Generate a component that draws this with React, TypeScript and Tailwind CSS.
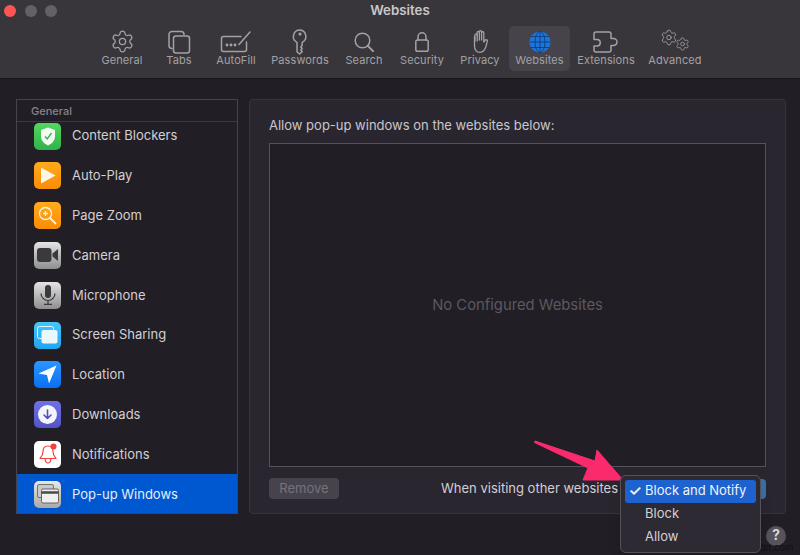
import { Settings } from 'lucide-react';
import type { ReactNode } from 'react';

const font = "font-['Inter','Liberation_Sans',sans-serif]";

const stroke = {
  fill: 'none',
  stroke: 'currentColor',
  strokeWidth: 1.5,
  strokeLinecap: 'round' as const,
  strokeLinejoin: 'round' as const,
};

const TabsIcon = () => (
  <svg width="24" height="24" viewBox="0 0 24 24" {...stroke}>
    <path d="M5 18.500a3 3 0 0 1-3-3V4.500a3 3 0 0 1 3-3h9a3 3 0 0 1 3 3" />
    <rect x="6.500" y="6" width="16" height="17" rx="2.500" />
  </svg>
);

const AutoFillIcon = () => (
  <svg width="32" height="24" viewBox="0 0 32 24" {...stroke}>
    <path d="M21 6.500H3.500a2 2 0 0 0-2 2v11a2 2 0 0 0 2 2h21a2 2 0 0 0 2-2V12" />
    <path d="M19 14.500 30 2" />
    <circle cx="7" cy="15" r=".7" fill="currentColor" />
    <circle cx="11" cy="15" r=".7" fill="currentColor" />
    <circle cx="15" cy="15" r=".7" fill="currentColor" />
  </svg>
);

const KeyIcon = () => (
  <svg width="16" height="26" viewBox="0 0 16 26" {...stroke}>
    <path d="M8 1a6.500 6.500 0 0 0-3 12.300v9.400L7.600 25l2.600-2.400-1.400-1.600 1.400-1.500-1.400-1.600 1.400-1.600v-3A6.500 6.500 0 0 0 8 1Z" />
    <circle cx="8" cy="5" r="1.600" fill="currentColor" stroke="none" />
  </svg>
);

const SearchIcon = () => (
  <svg width="20" height="20" viewBox="0 0 20 20" {...stroke}>
    <circle cx="8.500" cy="8.500" r="7.300" />
    <path d="m13.800 13.800 5.500 5.500" strokeWidth="1.900" />
  </svg>
);

const LockIcon = () => (
  <svg width="14" height="20" viewBox="0 0 14 20" {...stroke}>
    <rect x="0.800" y="8" width="12.400" height="11.200" rx="1.800" />
    <path d="M3 8V4.800a4 4 0 0 1 8 0V8" />
  </svg>
);

const HandIcon = () => (
  <svg width="17" height="23" viewBox="0 0 17 23" {...stroke} strokeWidth={1.300}>
    <path d="M3 11V5a1.100 1.100 0 0 1 2.200 0V2.500a1.100 1.100 0 0 1 2.200 0V1.800a1.100 1.100 0 0 1 2.200 0v1a1.100 1.100 0 0 1 2.200 0V12l1.300-1.800c.8-1 2.800-.2 2.200 1L14 16.500c-1.200 3.500-3 5.800-6 5.800-3.500 0-5.500-2.500-5.500-6.500V7a.8.8 0 0 1 .5-1" />
    <path d="M5.200 5v6M7.400 2.500V10M9.600 2.800V10" />
  </svg>
);

const GlobeIcon = () => (
  <svg width="22" height="22" viewBox="0 0 22 22">
    <circle cx="11" cy="11" r="10.600" fill="#1e74d8" />
    <g fill="none" stroke="#0b3f7e" strokeWidth="0.900">
      <ellipse cx="11" cy="11" rx="5" ry="10.600" />
      <path d="M11 .4v21.200M.4 11h21.200M2 5.500h18M2 16.500h18" />
    </g>
  </svg>
);

const PuzzleIcon = () => (
  <svg width="26" height="22" viewBox="0 0 26 22" {...stroke}>
    <path d="M1 3a2 2 0 0 1 2-2h13a2 2 0 0 1 2 2v4.500h2.500a3.500 3.500 0 0 1 0 7H18V19a2 2 0 0 1-2 2H3a2 2 0 0 1-2-2v-4h3a3 3 0 0 0 0-6.500H1Z" />
  </svg>
);

const AdvancedIcon = () => (
  <div className="-mt-[3px] flex h-[24px] w-[30px] items-start">
    <Settings size={19} strokeWidth={1.200} />
    <Settings size={16} strokeWidth={1.200} className="mt-[8px] -ml-[3px]" />
  </div>
);

const tabs: { label: string; icon: ReactNode; width: string }[] = [
  { label: 'General', icon: <Settings size={25} strokeWidth={1.200} />, width: 'w-[52px]' },
  { label: 'Tabs', icon: <TabsIcon />, width: 'w-[62px]' },
  { label: 'AutoFill', icon: <AutoFillIcon />, width: 'w-[52px]' },
  { label: 'Passwords', icon: <KeyIcon />, width: 'w-[76px]' },
  { label: 'Search', icon: <SearchIcon />, width: 'w-[52px]' },
  { label: 'Security', icon: <LockIcon />, width: 'w-[64px]' },
  { label: 'Privacy', icon: <HandIcon />, width: 'w-[52px]' },
  { label: 'Websites', icon: <GlobeIcon />, width: 'ml-[3px] w-[61px] rounded-[5px] bg-[#46434a] text-[#2b7bdc]' },
  { label: 'Extensions', icon: <PuzzleIcon />, width: 'w-[72px]' },
  { label: 'Advanced', icon: <AdvancedIcon />, width: 'w-[66px]' },
];

const Tile = ({ className, children }: { className: string; children: ReactNode }) => (
  <div className={`flex h-[27px] w-[27px] shrink-0 items-center justify-center rounded-[5px] ${className}`}>
    {children}
  </div>
);

const sites: { label: string; icon: ReactNode; active?: boolean }[] = [
  {
    label: 'Content Blockers',
    icon: (
      <Tile className="bg-gradient-to-b from-[#54d85e] to-[#2fb24a]">
        <svg width="16" height="19" viewBox="0 0 16 19">
          <path d="M8 .5 15 3v6c0 5-3.500 8-7 9.500C4.500 17 1 14 1 9V3Z" fill="#f4fbf3" />
          <path d="m5 9.500 2.200 2.500L11.500 6" fill="none" stroke="#35b54c" strokeWidth="1.400" />
        </svg>
      </Tile>
    ),
  },
  {
    label: 'Auto-Play',
    icon: (
      <Tile className="bg-gradient-to-b from-[#ffab1c] to-[#fb8c05]">
        <svg width="16" height="17" viewBox="0 0 16 17">
          <path d="M1 .5 15.500 8.500 1 16.500Z" fill="#fff6e6" />
        </svg>
      </Tile>
    ),
  },
  {
    label: 'Page Zoom',
    icon: (
      <Tile className="bg-gradient-to-b from-[#ffab1c] to-[#fb8c05]">
        <svg width="21" height="21" viewBox="0 0 21 21" fill="none" stroke="#fff3dc" strokeWidth="1.300">
          <circle cx="8.500" cy="8.500" r="6" />
          <path d="M8.500 6v5M6 8.500h5" />
          <path d="m13 13 6 6" strokeWidth="1.800" />
        </svg>
      </Tile>
    ),
  },
  {
    label: 'Camera',
    icon: (
      <Tile className="bg-gradient-to-b from-[#e4e4e4] to-[#8f8f8f]">
        <svg width="21" height="14" viewBox="0 0 21 14" fill="#3b393c">
          <rect x="0" y="0" width="14.500" height="14" rx="3" />
          <path d="M15.500 5.500 21 1v12l-5.500-4.500Z" />
        </svg>
      </Tile>
    ),
  },
  {
    label: 'Microphone',
    icon: (
      <Tile className="bg-gradient-to-b from-[#e4e4e4] to-[#8f8f8f]">
        <svg width="16" height="20" viewBox="0 0 16 20" fill="none" stroke="#3b393c" strokeWidth="1.200">
          <rect x="5" y="0" width="6" height="13" rx="3" fill="#3b393c" stroke="none" />
          <path d="M1 8.500a7 7 0 0 0 14 0M8 15.500V19M4 19.300h8" />
        </svg>
      </Tile>
    ),
  },
  {
    label: 'Screen Sharing',
    icon: (
      <Tile className="bg-gradient-to-b from-[#45c6fb] to-[#1ea6ef]">
        <svg width="21" height="18" viewBox="0 0 21 18">
          <rect x="0.500" y="0.500" width="16" height="12" rx="2" fill="none" stroke="#dff5ff" strokeWidth="1" />
          <rect x="4.500" y="4" width="16" height="13.500" rx="2" fill="#e9f8ff" />
        </svg>
      </Tile>
    ),
  },
  {
    label: 'Location',
    icon: (
      <Tile className="bg-gradient-to-b from-[#2a96ff] to-[#0a6ff0]">
        <svg width="19" height="19" viewBox="0 0 19 19">
          <path d="M18.500.5 0.500 8.500 9 10l2 8.500Z" fill="#ffffff" />
        </svg>
      </Tile>
    ),
  },
  {
    label: 'Downloads',
    icon: (
      <Tile className="bg-gradient-to-b from-[#6f70e6] to-[#5354c4]">
        <div className="flex h-[19px] w-[19px] items-center justify-center rounded-full bg-[#f4f4fd]">
          <svg width="11" height="11" viewBox="0 0 11 11" fill="none" stroke="#4f50c0" strokeWidth="1.600" strokeLinecap="round" strokeLinejoin="round">
            <path d="M5.500 1v8.500M2 6l3.500 3.500L9 6" />
          </svg>
        </div>
      </Tile>
    ),
  },
  {
    label: 'Notifications',
    icon: (
      <Tile className="bg-white">
        <svg width="20" height="22" viewBox="0 0 20 22" fill="none" stroke="#f0413c" strokeWidth="1.200" strokeLinejoin="round">
          <path d="M10 3c-3.200 0-5 2.300-5 5.500 0 3-1 5-3 7h16c-2-2-3-4-3-7C15 5.300 13.200 3 10 3Z" />
          <path d="M7 15.500c.3 2.800 1.500 4.500 3 4.500s2.700-1.700 3-4.500" />
          <circle cx="15.500" cy="3.500" r="3" fill="#f0413c" stroke="none" />
        </svg>
      </Tile>
    ),
  },
  {
    label: 'Pop-up Windows',
    active: true,
    icon: (
      <Tile className="bg-gradient-to-b from-[#e8e8e8] to-[#a9a9a9]">
        <svg width="22" height="20" viewBox="0 0 22 20">
          <rect x="0.500" y="0.500" width="16" height="13" rx="1.500" fill="#c9c9c9" stroke="#5d5d5d" strokeWidth="0.800" />
          <rect x="4.500" y="5" width="17" height="14" rx="1.500" fill="#efefef" stroke="#4a4a4a" strokeWidth="0.800" />
          <path d="M4.500 8.500h17" stroke="#4a4a4a" strokeWidth="2.500" />
        </svg>
      </Tile>
    ),
  },
];

const Arrow = () => (
  <svg className="absolute top-[436px] left-[530px]" width="100" height="52" viewBox="0 0 100 52">
    <path d="M5 5 4.500 6.500 58 32 53 44 93 44 67 14 65 25Z" fill="#fb2a6d" stroke="#fb2a6d" strokeWidth="1" strokeLinejoin="round" />
  </svg>
);

const App = () => {
  return (
    <div className={`relative h-[555px] w-[800px] overflow-hidden bg-[#221e26] ${font}`}>
      <header className="h-[79px] border-b border-[#17141a] bg-[#39363b]">
        <div className="grid h-[22px] grid-cols-[1fr_auto_1fr] items-center">
          <div className="flex gap-[8.500px] pl-[4px]">
            <span className="h-[12px] w-[12px] rounded-full bg-[#fd5554]" />
            <span className="h-[12px] w-[12px] rounded-full bg-[#646166]" />
            <span className="h-[12px] w-[12px] rounded-full bg-[#646166]" />
          </div>
          <div className="text-[13.300px] leading-none font-semibold text-[#c9c7ca]">Websites</div>
        </div>
        <nav className="mt-[4px] flex pl-[96px]">
          {tabs.map((tab) => (
            <div
              key={tab.label}
              className={`flex h-[45px] shrink-0 flex-col items-center text-[#a3a1a5] ${tab.width}`}
            >
              <div className="flex h-[27px] items-center justify-center pt-[4px]">{tab.icon}</div>
              <div className="text-[11px] leading-[14px] tracking-[0.100px] whitespace-nowrap">{tab.label}</div>
            </div>
          ))}
        </nav>
      </header>

      <main className="pt-[20px] pl-[16px]">
        <div className="flex h-[415px] gap-[11px]">
          <aside className="flex w-[222px] flex-col overflow-hidden border border-[#47434c]">
            <div className="relative z-10 h-[22px] shrink-0 border-b border-[#3d3942] bg-[#221e26] pt-[4px] pl-[14px] text-[11px] leading-[14px] font-medium text-[#87848b]">
              General
            </div>
            <div className="-mt-[5.800px]">
              {sites.map((site) => (
                <div
                  key={site.label}
                  className={`flex h-[39.800px] items-center gap-[11px] pl-[17px] text-[13px] ${
                    site.active ? 'bg-[#0058d0] text-[#e6edf8]' : 'text-[#d2d0d3]'
                  }`}
                >
                  {site.icon}
                  <span className="whitespace-nowrap">{site.label}</span>
                </div>
              ))}
            </div>
          </aside>

          <section className="flex w-[537px] flex-col rounded-[4px] border border-[#37333b] bg-[#2a2630] pt-[16px] pr-[19px] pl-[19px]">
            <p className="text-[13px] leading-[18px] text-[#c9c7ca]">Allow pop-up windows on the websites below:</p>
            <div className="mt-[9px] flex h-[324px] items-center justify-center border border-[#56525a] bg-[#221e26] text-[14.800px] text-[#5c585f]">
              No Configured Websites
            </div>
            <div className="mt-[11px] flex items-center">
              <button
                type="button"
                className="h-[21px] w-[70px] rounded-[4px] bg-[#47434c] text-[13px] text-[#75727a]"
              >
                Remove
              </button>
              <span className="ml-auto text-[13px] whitespace-nowrap text-[#d2d0d3]">When visiting other websites</span>
              <div className="relative ml-[6px] h-[20px] w-[142px] rounded-[4px] bg-[#3a6ea8]">
                <div className="absolute -top-[4px] -left-[4px] z-20 flex h-[78px] w-[141px] flex-col rounded-[6px] border border-[#56525a] bg-[#2d2a33] px-[4px] pt-[4px] text-[13px] text-[#d2d0d3] shadow-lg">
                  <div className="flex h-[23px] items-center rounded-[3px] bg-[#1d62cf] text-[#eef3fb]">
                    <span className="w-[20px] text-center text-[15px] font-semibold">✓</span>
                    Block and Notify
                  </div>
                  <div className="flex h-[22.500px] items-center pl-[20px]">Block</div>
                  <div className="flex h-[22.500px] items-center pl-[20px]">Allow</div>
                </div>
              </div>
            </div>
          </section>
        </div>

        <div className="mt-[12px] flex justify-end pr-[14px]">
          <div className="flex h-[20px] w-[20px] items-start justify-center rounded-full bg-[#56535a] pt-[1px] text-[14px] leading-[16px] font-semibold text-[#e0dee1]">
            ?
          </div>
        </div>
      </main>

      <Arrow />
      <div className="absolute top-[543px] left-[742px] text-[9.500px] leading-[9px] text-[#121014]">wsxdn.com</div>
    </div>
  );
};

export default App;
